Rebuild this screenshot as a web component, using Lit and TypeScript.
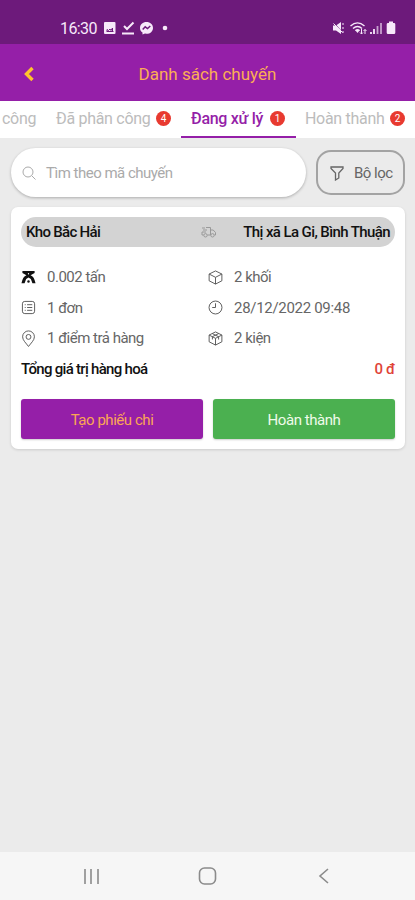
import { LitElement, html, css, svg } from "lit";
import { customElement } from "lit/decorators.js";

const truck = svg`<path d="M5 3.500h4.500v7.500H6.500M2.500 11H1V8M9.500 6h2.700l2.300 2.500V11H13.500M1 4h3M2 6h4M1 8h4"/><circle cx="4.500" cy="11.300" r="1.700"/><circle cx="11.500" cy="11.300" r="1.700"/>`;
const cube = svg`<path d="M8 1 14.800 4.300V11.500L8 15 1.200 11.500V4.300ZM1.200 4.300 8 7.800l6.800-3.500M8 7.800V15"/>`;
const parcel = svg`<path d="M8 1 14.800 4.300V11.500L8 15 1.200 11.500V4.300ZM1.200 4.300 8 7.800l6.800-3.500M8 7.800V15M4.500 2.700l6.800 3.400v3M11.500 2.700 4.700 6v3"/>`;
const clock = svg`<circle cx="8" cy="8" r="6.900"/><path d="M8 3.500V8H4.500"/>`;
const order = svg`<rect x="1.500" y="1.500" width="13" height="13" rx="2.500"/><path d="M4 5h1M6.500 5H12M4 8h1M6.500 8H12M4 11h1M6.500 11H12"/>`;
const pin = svg`<path d="M8 16.500C5.500 13 1.700 9.900 1.700 6.200a6.300 6.300 0 0 1 12.600 0C14.300 9.900 10.500 13 8 16.500Z"/><circle cx="8" cy="6.300" r="2.600"/>`;
const scale = svg`<path class="solid" d="M1.500 1h13v2.300L10.200 5.500c2.600.8 4.300 3.800 5.300 8.500h-3.300L10.500 9.500 8 8 5.500 9.500 3.800 14H.5c1-4.700 2.700-7.700 5.300-8.500L1.500 3.300z"/><circle class="solid" cx="8" cy="12.300" r="1.300"/><circle cx="8" cy="4" r=".7" class="hole"/>`;

@customElement("app-root")
export class AppRoot extends LitElement {
  static styles = css`
    :host { display: flex; flex-direction: column; width: 415px; height: 900px; overflow: hidden; background: #ebebeb; font-family: Roboto, "Noto Sans", sans-serif; font-size: 16px; color: #666; }
    * { box-sizing: border-box; }
    svg { display: block; flex: none; fill: none; stroke: currentColor; stroke-width: 1; }
    .solid { fill: currentColor; stroke: none; }
    .hole { fill: #fff; stroke: none; }
    .cut { stroke: #6d1a7b; }
    .status { height: 44px; flex: none; background: #6d1a7b; color: #f7e9fa; display: flex; align-items: center; padding: 12px 19px 0 60px; }
    .time { font-size: 16px; width: 43px; letter-spacing: -0.6px; white-space: nowrap; }
    .grow { flex: 1; }
    .bar { height: 57px; flex: none; background: #951fa8; color: #fbae55; display: grid; grid-template-columns: 58px 1fr 58px; align-items: center; text-align: center; font-size: 17px; padding-top: 2px; }
    .bar svg { margin-left: 22px; color: #ffc32d; stroke-width: 3.400; }
    .title { white-space: nowrap; }
    .tabs { height: 37px; flex: none; background: #fff; display: flex; color: #bcbcbc; white-space: nowrap; letter-spacing: -0.3px; }
    .tab { display: flex; align-items: center; height: 37px; padding-bottom: 2px; }
    .t1 { width: 56px; padding-left: 2px; }
    .t2 { width: 125px; }
    .t3 { width: 115px; padding-left: 10px; color: #951fa8; border-bottom: 2px solid #951fa8; padding-bottom: 0; font-weight: 500; }
    .t4 { padding-left: 9px; }
    .tab span { flex: none; }
    .t1 span { width: 34px; }
    .t2 span { width: 100px; }
    .t3 span { width: 79px; }
    .t4 span { width: 85px; }
    .badge { width: 15px; height: 15px; border-radius: 50%; background: #e83a30; color: #fff; font-size: 10px; font-weight: 400; font-style: normal; line-height: 15px; letter-spacing: 0; text-align: center; }
    .tools { display: flex; align-items: center; gap: 10px; height: 69px; padding: 0 10px 0 11px; flex: none; }
    .search { width: 295px; height: 49px; border-radius: 25px; background: #fff; box-shadow: 0 1px 3px #0004; display: flex; align-items: center; padding-left: 10px; gap: 9px; color: #aaa; font-size: 15px; letter-spacing: -0.500px; }
    .filter { width: 89px; height: 45px; border: 2px solid #a3a3a3; border-radius: 15px; display: flex; align-items: center; padding-left: 11px; gap: 9px; white-space: nowrap; font-size: 15px; letter-spacing: -0.500px; }
    .card { margin: 0 10px 0 11px; height: 242px; background: #fff; border-radius: 7px; box-shadow: 0 1px 3px #0002; padding: 10px; flex: none; }
    .route { height: 30px; border-radius: 15px; background: #d3d3d3; display: flex; align-items: center; padding: 0 5px; color: #111; font-weight: 500; white-space: nowrap; font-size: 15px; letter-spacing: -0.600px; }
    .from { width: 175px; letter-spacing: -0.700px; }
    .route svg { color: #999; }
    .to { flex: 1; text-align: right; }
    .facts { display: grid; grid-template-columns: 187px 1fr; grid-auto-rows: 30.500px; padding-top: 15px; font-size: 15px; letter-spacing: -0.500px; }
    .fact { display: flex; align-items: center; gap: 11px; white-space: nowrap; }
    .fact svg { color: #555; overflow: visible; }
    .fact.dark svg { color: #111; }
    .fact.date { letter-spacing: -0.300px; }
    .total { display: flex; justify-content: space-between; height: 30px; align-items: center; color: #111; font-weight: 500; font-size: 15px; letter-spacing: -0.700px; }
    .price { color: #e04438; letter-spacing: -0.300px; }
    .actions { display: grid; grid-template-columns: 182px 182px; gap: 10px; padding-top: 15px; }
    .btn { height: 40px; border-radius: 3px; background: #951fa8; color: #fba654; text-align: center; line-height: 42px; box-shadow: 0 1px 2px #0003; font-size: 15px; letter-spacing: -0.450px; }
    .btn.done { background: #4bb050; color: #effbe9; }
    .nav { height: 48px; background: #f6f6f6; display: flex; align-items: center; justify-content: space-between; padding: 2px 81px; color: #8b8b8b; flex: none; }
    .nav svg { stroke-width: 1.600; }
  `;

  icon(shape: unknown, size = 16) {
    return html`<svg width=${size} height=${size} viewBox="0 0 16 16">${shape}</svg>`;
  }

  fact(shape: unknown, text: string, kind = "") {
    return html`<div class="fact ${kind}">${this.icon(shape, 15)}<span>${text}</span></div>`;
  }

  render() {
    return html`
      <div class="status">
        <span class="time">16:30</span>
        <svg width="66" height="16" viewBox="0 0 66 16">
          <rect class="solid" x="1" y="2" width="11.500" height="12" rx="1"/>
          <path class="cut" d="M3.500 11.500h7M4 11V9.500l1.500 1L7 9l1 1.500L9.500 8v3"/>
          <path d="m21 6 3 3 6.500-6.500M19 13.500h12" stroke-width="2"/>
          <path class="solid" d="M43.500 2c3.700 0 6.500 2.500 6.500 5.900s-2.800 5.900-6.500 5.900l-1.500-.2-2.500 1v-2C38 11.500 37 9.900 37 7.900 37 4.500 39.800 2 43.500 2Z"/>
          <path class="cut" d="m39.700 9.500 2.500-2.700 2.300 1.700L47.300 6" stroke-width="1.500"/>
          <circle class="solid" cx="62" cy="8" r="2.300"/>
        </svg>
        <span class="grow"></span>
        <svg width="64" height="16" viewBox="0 0 64 16">
          <path class="solid" d="M1 5.500h3L9 2v12l-5-3.500H1z"/>
          <path class="cut" d="m1 2 10 11"/>
          <path d="m1.500 3.500 9 9M11 3v2M11 7v2M11 11v2"/>
          <path d="M18.500 6c4.500-4 9.500-4 14 0M21 8.500c3-2.700 6-2.700 9 0M23.500 10.500c1.500-1.300 2.500-1.300 4 0" stroke-width="1.400"/>
          <path class="solid" d="m23 10 2.500 3 2.500-3z"/>
          <path d="M29.500 9v5M28 12.500l1.500 1.500 1.500-1.500M33 14V9.500M31.500 11 33 9.500l1.500 1.500"/>
          <path d="M39 12v2M42 9v5" stroke-width="1.800"/>
          <path d="M45.500 6v8M49 3v11" stroke-width="1.800" opacity=".65"/>
          <path class="solid" d="M57 1.500h4V3h1q1.300 0 1.300 1.300v8.400q0 1.300-1.300 1.300h-6q-1.300 0-1.300-1.300V4.300Q54.700 3 56 3h1z"/>
        </svg>
      </div>
      <div class="bar"><svg width="14" height="16" viewBox="0 0 14 16"><path d="M10.500 2 4.500 8l6 6"/></svg><span class="title">Danh sách chuyến</span></div>
      <div class="tabs">
        <div class="tab t1"><span>công</span></div>
        <div class="tab t2"><span>Đã phân công</span><i class="badge">4</i></div>
        <div class="tab t3"><span>Đang xử lý</span><i class="badge">1</i></div>
        <div class="tab t4"><span>Hoàn thành</span><i class="badge">2</i></div>
      </div>
      <div class="tools">
        <div class="search">${this.icon(svg`<circle cx="7" cy="7" r="5"/><path d="m10.800 10.800 3.700 3.700"/>`)}<span>Tìm theo mã chuyến</span></div>
        <div class="filter">${this.icon(svg`<path d="M2 2h12v1.500L9.800 8v5L6.500 15V8L2 3.500Z" stroke-width="1.300"/>`)}<span>Bộ lọc</span></div>
      </div>
      <div class="card">
        <div class="route"><span class="from">Kho Bắc Hải</span>${this.icon(truck)}<span class="to">Thị xã La Gi, Bình Thuận</span></div>
        <div class="facts">
          ${this.fact(scale, "0.002 tấn", "dark")}${this.fact(cube, "2 khối")}
          ${this.fact(order, "1 đơn")}${this.fact(clock, "28/12/2022 09:48", "date")}
          ${this.fact(pin, "1 điểm trả hàng")}${this.fact(parcel, "2 kiện")}
        </div>
        <div class="total"><span>Tổng giá trị hàng hoá</span><span class="price">0 đ</span></div>
        <div class="actions"><div class="btn">Tạo phiếu chi</div><div class="btn done">Hoàn thành</div></div>
      </div>
      <div class="grow"></div>
      <div class="nav">
        <svg width="20" height="18" viewBox="0 0 20 18"><path d="M4 2v15M10 2v15M17 2v15"/></svg>
        <svg width="20" height="18" viewBox="0 0 20 18"><rect x="1.500" y="1" width="16" height="16" rx="5"/></svg>
        <svg width="20" height="18" viewBox="0 0 20 18"><path d="m14 2-8 7 8 7"/></svg>
      </div>`;
  }
}
